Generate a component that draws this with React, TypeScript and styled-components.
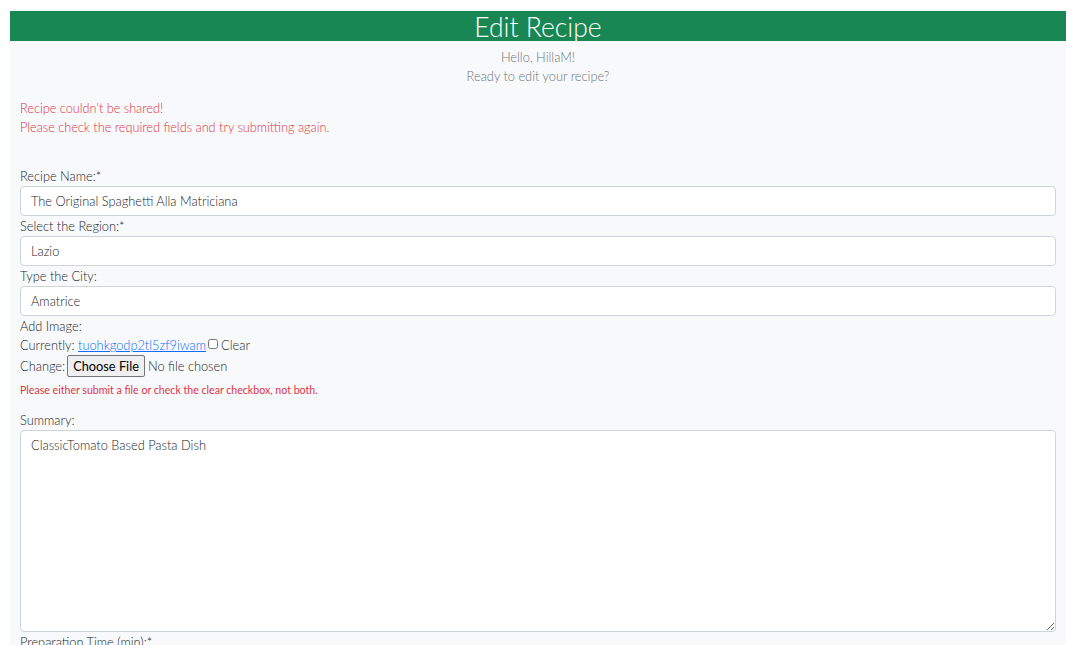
import React from "react";
import styled, { createGlobalStyle } from "styled-components";

const GlobalStyle = createGlobalStyle`
  html, body { margin: 0; padding: 0; background: #ffffff; }
  body { font-family: Lato, "Noto Sans", sans-serif; font-weight: 300; color: #212529; }
  * { box-sizing: border-box; }
`;

const Page = styled.div`
  padding: 11px 1px 0 10px;
`;

const Card = styled.main`
  background: #f8f9fa;
  padding-bottom: 40px;
`;

const Header = styled.header`
  background: #198754;
  height: 30px;
  display: flex;
  align-items: center;
  justify-content: center;
`;

const Title = styled.h1`
  margin: 0;
  color: #ffffff;
  font-family: Lato, sans-serif;
  font-weight: 300;
  font-size: 26.5px;
  line-height: 30px;
  transform: translateY(1px);
`;

const Greeting = styled.div`
  margin-top: 7px;
  text-align: center;
  color: #6c757d;
  font-size: 12.8px;
  line-height: 19.2px;
`;

const Line = styled.p`
  margin: 0;
`;

const Alerts = styled.div`
  margin-top: 12.6px;
  padding: 0 10px;
  color: #dc3545;
  font-size: 12.7px;
  line-height: 19.2px;
`;

const Form = styled.form`
  margin-top: 29px;
  padding: 0 10px;
  display: flex;
  flex-direction: column;
`;

const Label = styled.label<{ $gapTop?: number }>`
  display: block;
  font-size: 12.8px;
  line-height: 20px;
  color: #212529;
  margin-top: ${(p) => p.$gapTop ?? 0}px;
`;

const TextInput = styled.input`
  display: block;
  width: 100%;
  height: 30px;
  padding: 0 10px;
  font-family: Lato, sans-serif;
  font-weight: 300;
  font-size: 12.8px;
  color: #212529;
  background: #ffffff;
  border: 1px solid #ced4da;
  border-radius: 4px;
  outline: none;
`;

const Row = styled.div<{ $h: number }>`
  display: flex;
  align-items: center;
  height: ${(p) => p.$h}px;
  font-size: 12.8px;
  color: #212529;
  white-space: pre;
`;

const Link = styled.a`
  color: #0d6efd;
  text-decoration: underline;
`;

const Check = styled.input`
  width: 10px;
  height: 10px;
  margin: 0 3px 0 2px;
  transform: translateY(-1px);
`;

const FileButton = styled.span`
  display: inline-flex;
  align-items: center;
  height: 22px;
  padding: 0 5px;
  margin: 0 3px 0 2px;
  background: #efefef;
  border: 1px solid #767676;
  border-radius: 2px;
  font-size: 12.8px;
  font-weight: 400;
  color: #000000;
`;

const FieldError = styled.div`
  margin-top: 5px;
  color: #dc3545;
  font-size: 10.6px;
  font-weight: 400;
  line-height: 16px;
`;

const TextArea = styled.textarea`
  display: block;
  width: 100%;
  height: 202px;
  padding: 5px 10px;
  font-family: Lato, sans-serif;
  font-weight: 300;
  font-size: 12.8px;
  line-height: 19.2px;
  color: #212529;
  background: #ffffff;
  border: 1px solid #ced4da;
  border-radius: 4px;
  outline: none;
  resize: vertical;
`;

export default function App() {
  return (
    <>
      <GlobalStyle />
      <Page>
        <Card>
          <Header>
            <Title>Edit Recipe</Title>
          </Header>
          <Greeting>
            <Line>Hello, HillaM!</Line>
            <Line>Ready to edit your recipe?</Line>
          </Greeting>
          <Alerts>
            <Line>Recipe couldn't be shared!</Line>
            <Line>Please check the required fields and try submitting again.</Line>
          </Alerts>
          <Form onSubmit={(e) => e.preventDefault()}>
            <Label>Recipe Name:*</Label>
            <TextInput defaultValue="The Original Spaghetti Alla Matriciana" />
            <Label>Select the Region:*</Label>
            <TextInput defaultValue="Lazio" />
            <Label>Type the City:</Label>
            <TextInput defaultValue="Amatrice" />
            <Label>Add Image:</Label>
            <Row $h={18}>
              Currently: <Link href="#">tuohkgodp2tl5zf9iwam</Link>
              <Check type="checkbox" />Clear
            </Row>
            <Row $h={23}>
              Change:<FileButton>Choose File</FileButton>No file chosen
            </Row>
            <FieldError>Please either submit a file or check the clear checkbox, not both.</FieldError>
            <Label $gapTop={12}>Summary:</Label>
            <TextArea defaultValue="ClassicTomato Based Pasta Dish" />
            <Label>Preparation Time (min):*</Label>
          </Form>
        </Card>
      </Page>
    </>
  );
}
